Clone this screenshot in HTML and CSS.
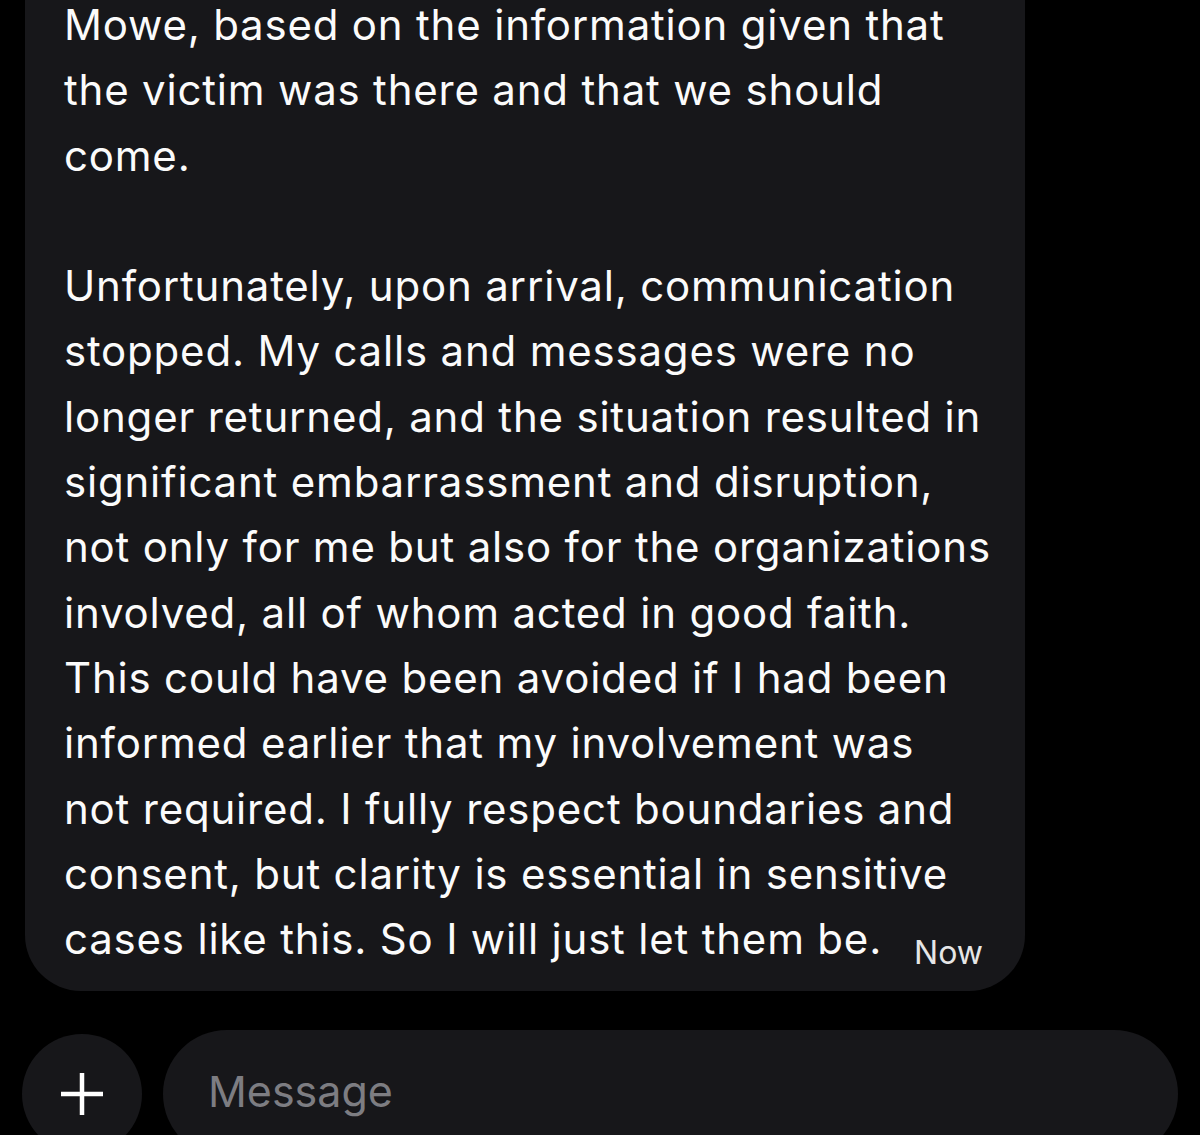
FILE: index.html
```html
<!DOCTYPE html>
<html>
<head>
<meta charset="utf-8">
<link rel="stylesheet" href="styles.css">
</head>
<body>
<div class="thread">
  <div class="bubble">
    <p class="msg">Mowe, based on the information given that<br>the victim was there and that we should<br>come.<br><br>Unfortunately, upon arrival, communication<br>stopped. My calls and messages were no<br>longer returned, and the situation resulted in<br>significant embarrassment and disruption,<br>not only for me but also for the organizations<br>involved, all of whom acted in good faith.<br>This could have been avoided if I had been<br>informed earlier that my involvement was<br>not required. I fully respect boundaries and<br>consent, but clarity is essential in sensitive</p>
    <div class="last-row">
      <span class="msg">cases like this. So I will just let them be.</span>
      <span class="time">Now</span>
    </div>
  </div>
  <div class="composer">
    <button class="add" aria-label="Add">
      <svg width="46" height="46" viewBox="0 0 46 46"><path d="M23 2v42M2 23h42" stroke="#fff" stroke-width="4.5" fill="none"/></svg>
    </button>
    <div class="input">Message</div>
  </div>
</div>
</body>
</html>
```
FILE: styles.css
```css
html, body {
  margin: 0;
  padding: 0;
  background: #000;
  height: 100%;
  overflow: hidden;
}
body {
  font-family: Inter, "Noto Sans", sans-serif;
  color: #fff;
}
.thread {
  display: flex;
  flex-direction: column;
}
.bubble {
  margin-left: 25px;
  width: 1000px;
  box-sizing: border-box;
  background: #17171a;
  border-radius: 0 0 56px 56px;
  padding: 0 42px 20px 39px;
}
.msg {
  margin: -8px 0 0 0;
  font-size: 42px;
  letter-spacing: 0.8px;
  line-height: 65.3px;
  white-space: nowrap;
  color: #fbfbfb;
}
.last-row {
  display: flex;
  align-items: baseline;
  justify-content: space-between;
}
.last-row .msg {
  margin: 0;
}
.time {
  font-size: 32px;
  color: #e6e6e6;
  position: relative;
  top: 10px;
}
.composer {
  display: flex;
  align-items: flex-start;
  gap: 21px;
  margin-top: 39px;
  padding-left: 22px;
}
.add {
  width: 120px;
  height: 120px;
  margin-top: 4px;
  flex: none;
  border: none;
  border-radius: 50%;
  background: #17171a;
  display: flex;
  align-items: center;
  justify-content: center;
  padding: 0;
}
.input {
  width: 1015px;
  height: 128px;
  box-sizing: border-box;
  border-radius: 64px;
  background: #17171a;
  padding: 35px 0 0 45px;
  font-size: 43px;
  color: #7d7d82;
}
```
